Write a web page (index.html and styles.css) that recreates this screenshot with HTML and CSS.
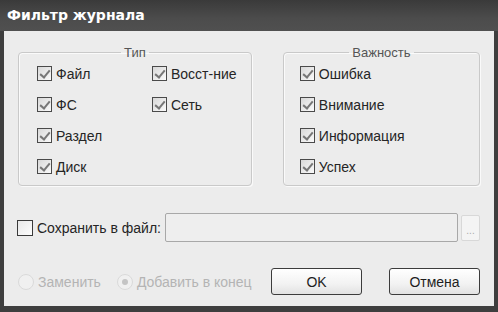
FILE: index.html
```html
<!DOCTYPE html>
<html lang="ru">
<head>
  <meta charset="UTF-8" />
  <title>Фильтр журнала</title>
  <link rel="stylesheet" href="styles.css">
</head>
<body>
  <div class="window">
    <div class="titlebar">Фильтр журнала</div>
    <div class="content">
      <div class="groups">
        <fieldset class="group group-type">
          <legend>Тип</legend>
          <div class="grid">
            <label class="check"><span class="box on"></span>Файл</label>
            <label class="check"><span class="box on"></span>Восст-ние</label>
            <label class="check"><span class="box on"></span>ФС</label>
            <label class="check"><span class="box on"></span>Сеть</label>
            <label class="check"><span class="box on"></span>Раздел</label>
            <span></span>
            <label class="check"><span class="box on"></span>Диск</label>
          </div>
        </fieldset>
        <fieldset class="group group-level">
          <legend>Важность</legend>
          <div class="list">
            <label class="check"><span class="box on"></span>Ошибка</label>
            <label class="check"><span class="box on"></span>Внимание</label>
            <label class="check"><span class="box on"></span>Информация</label>
            <label class="check"><span class="box on"></span>Успех</label>
          </div>
        </fieldset>
      </div>

      <div class="save-row">
        <label class="check save"><span class="box"></span>Сохранить в файл:</label>
        <div class="path"></div>
        <div class="browse">...</div>
      </div>

      <div class="bottom-row">
        <div class="radios">
          <label class="radio"><span class="dot"></span>Заменить</label>
          <label class="radio"><span class="dot sel"></span>Добавить в конец</label>
        </div>
        <div class="buttons">
          <button class="btn ok">OK</button>
          <button class="btn">Отмена</button>
        </div>
      </div>
    </div>
  </div>
</body>
</html>
```

FILE: styles.css
```css
body {
  margin: 0;
  background: #3c3c3c;
  font-family: Tahoma, "DejaVu Sans", sans-serif;
}
.window {
  width: 498px;
  height: 312px;
  display: flex;
  flex-direction: column;
  background: #3e3e3e;
}
.titlebar {
  height: 31px;
  flex-shrink: 0;
  box-sizing: border-box;
  padding: 7px 0 0 7px;
  color: #fff;
  font-family: "DejaVu Sans", sans-serif;
  font-weight: bold;
  font-size: 14px;
  background: linear-gradient(#3a3a3a, #4c4c4c 60%, #505050);
}
.content {
  flex: 1;
  margin: 0 4px 6px 4px;
  background: #ececec;
  padding: 0 14px 0 14px;
  font-family: "Liberation Sans", Arial, sans-serif;
  font-size: 13px;
  color: #252525;
}
.groups {
  display: flex;
  gap: 31px;
  padding-top: 14px;
}
.group {
  margin: 0;
  padding: 4px 0 0 0;
  border: 1px solid #c9c9c9;
  border-radius: 4px;
  box-shadow: inset 1px 1px 0 #fafafa, 1px 1px 0 #fafafa;
  height: 135px;
}
.group legend {
  margin: 0 auto;
  padding: 0 3px;
  color: #555;
  font-size: 13px;
}
.group-type {
  width: 234px;
}
.group-level {
  width: 197px;
}
.grid {
  display: grid;
  grid-template-columns: 115px auto;
  row-gap: 14px;
  padding-left: 18px;
  padding-top: 1px;
}
.list {
  display: flex;
  flex-direction: column;
  gap: 14px;
  padding-left: 16px;
  padding-top: 1px;
}
.check {
  display: flex;
  align-items: center;
  gap: 4px;
  height: 17px;
  font-size: 14px;
}
.box {
  width: 13px;
  height: 13px;
  border: 1px solid #4a4a4a;
  background: linear-gradient(135deg, #d8d8d8, #fafafa);
  position: relative;
  flex-shrink: 0;
}
.box.on::after {
  content: "";
  position: absolute;
  left: 4px;
  top: 1px;
  width: 4px;
  height: 8px;
  border: solid #777;
  border-width: 0 2px 2px 0;
  transform: rotate(40deg);
}
.save-row {
  display: flex;
  align-items: center;
  margin-top: 27px;
}
.save {
  width: 148px;
  flex-shrink: 0;
  margin-left: -1px;
}
.save .box {
  width: 14px;
  height: 14px;
  border-color: #3a3a3a;
  background: linear-gradient(135deg, #e8e8e8, #fdfdfd);
}
.path {
  width: 291px;
  height: 27px;
  border: 1px solid #a8a8a8;
  border-radius: 2px;
  background: #eeeeee;
}
.browse {
  width: 17px;
  height: 24px;
  margin-left: 3px;
  border: 1px solid #d8d8d8;
  border-radius: 2px;
  background: #f4f4f4;
  color: #aaa;
  font-size: 10px;
  text-align: center;
  line-height: 30px;
}
.bottom-row {
  display: flex;
  justify-content: space-between;
  align-items: center;
  margin-top: 26px;
}
.radios {
  display: flex;
  gap: 16px;
  color: #b4b4b4;
  font-size: 14px;
}
.radio {
  display: flex;
  align-items: center;
  gap: 4px;
}
.dot {
  width: 14px;
  height: 14px;
  border-radius: 50%;
  border: 1px solid #dadada;
  background: #f0f0f0;
  position: relative;
}
.dot.sel::after {
  content: "";
  position: absolute;
  left: 4px;
  top: 4px;
  width: 6px;
  height: 6px;
  border-radius: 50%;
  background: #c4c4c4;
}
.buttons {
  display: flex;
  gap: 27px;
}
.btn {
  width: 91px;
  height: 27px;
  border: 1px solid #3c3c3c;
  border-radius: 3px;
  background: linear-gradient(#ffffff, #f2f2f2 60%, #e2e2e2);
  font-family: "Liberation Sans", Arial, sans-serif;
  font-size: 14px;
  color: #1e1e1e;
  padding: 0;
}
```
